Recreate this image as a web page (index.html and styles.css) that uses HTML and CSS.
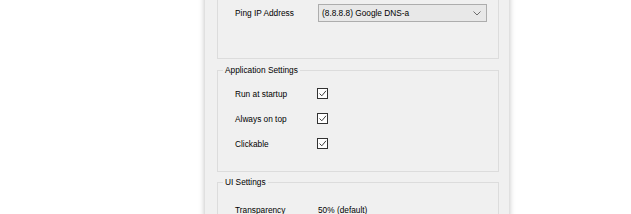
FILE: index.html
```html
<!DOCTYPE html>
<html lang="en">
<head>
  <meta charset="UTF-8">
  <title>Settings</title>
  <link rel="stylesheet" href="styles.css">
</head>
<body>
  <div class="window">
    <fieldset class="group group-network">
      <div class="row">
        <span class="label">Ping IP Address</span>
        <div class="combo">
          <span>(8.8.8.8) Google DNS-a</span>
          <svg class="chevron" width="8" height="5" viewBox="0 0 8 5"><path d="M0.5 0.5 L4 4 L7.5 0.5" fill="none" stroke="#6d6d6d" stroke-width="1"/></svg>
        </div>
      </div>
    </fieldset>

    <fieldset class="group group-app">
      <legend>Application Settings</legend>
      <div class="row">
        <span class="label">Run at startup</span>
        <span class="check"><svg width="9" height="9" viewBox="0 0 9 9"><path d="M1.5 4.5 L3.8 6.8 L8 1.8" fill="none" stroke="#404040" stroke-width="1"/></svg></span>
      </div>
      <div class="row">
        <span class="label">Always on top</span>
        <span class="check"><svg width="9" height="9" viewBox="0 0 9 9"><path d="M1.5 4.5 L3.8 6.8 L8 1.8" fill="none" stroke="#404040" stroke-width="1"/></svg></span>
      </div>
      <div class="row">
        <span class="label">Clickable</span>
        <span class="check"><svg width="9" height="9" viewBox="0 0 9 9"><path d="M1.5 4.5 L3.8 6.8 L8 1.8" fill="none" stroke="#404040" stroke-width="1"/></svg></span>
      </div>
    </fieldset>

    <fieldset class="group group-ui">
      <legend>UI Settings</legend>
      <div class="row">
        <span class="label">Transparency</span>
        <span class="value">50% (default)</span>
      </div>
    </fieldset>
  </div>
</body>
</html>
```

FILE: styles.css
```css
body {
  margin: 0;
  background: #fff;
  font-family: "Liberation Sans", Arial, sans-serif;
  font-size: 8.3px;
  color: #000;
  overflow: hidden;
}
.window {
  width: 304px;
  height: 232px;
  margin: -12px 0 0 205px;
  padding: 6px 10px 0 12px;
  box-sizing: border-box;
  background: #f0f0f0;
  box-shadow: 0 0 6px rgba(0, 0, 0, 0.28);
}
.group {
  margin: 0;
  padding: 0 0 0 17px;
  border: 1px solid #dcdcdc;
  min-width: 0;
}
.group legend {
  margin-left: -12px;
  padding: 0 2px;
  line-height: 12px;
  height: 12px;
}
.group-network {
  padding-top: 9px;
  padding-bottom: 36px;
}
.group-app {
  margin-top: 5px;
  padding-top: 5px;
  padding-bottom: 15px;
}
.group-ui {
  margin-top: 4px;
  padding-top: 9px;
}
.row {
  display: flex;
  align-items: center;
  height: 25px;
}
.group-network .row {
  height: 18px;
}
.label {
  width: 83px;
}
.combo {
  width: 169px;
  height: 18px;
  box-sizing: border-box;
  border: 1px solid #adadad;
  background: #e8e8e8;
  display: flex;
  align-items: center;
  justify-content: space-between;
  padding: 0 5px 0 3px;
}
.chevron {
  display: block;
}
.check {
  width: 11px;
  height: 11px;
  box-sizing: border-box;
  border: 1px solid #333;
  background: #fff;
  display: flex;
  align-items: center;
  justify-content: center;
  margin-left: -1px;
}
.check svg {
  display: block;
}
```
